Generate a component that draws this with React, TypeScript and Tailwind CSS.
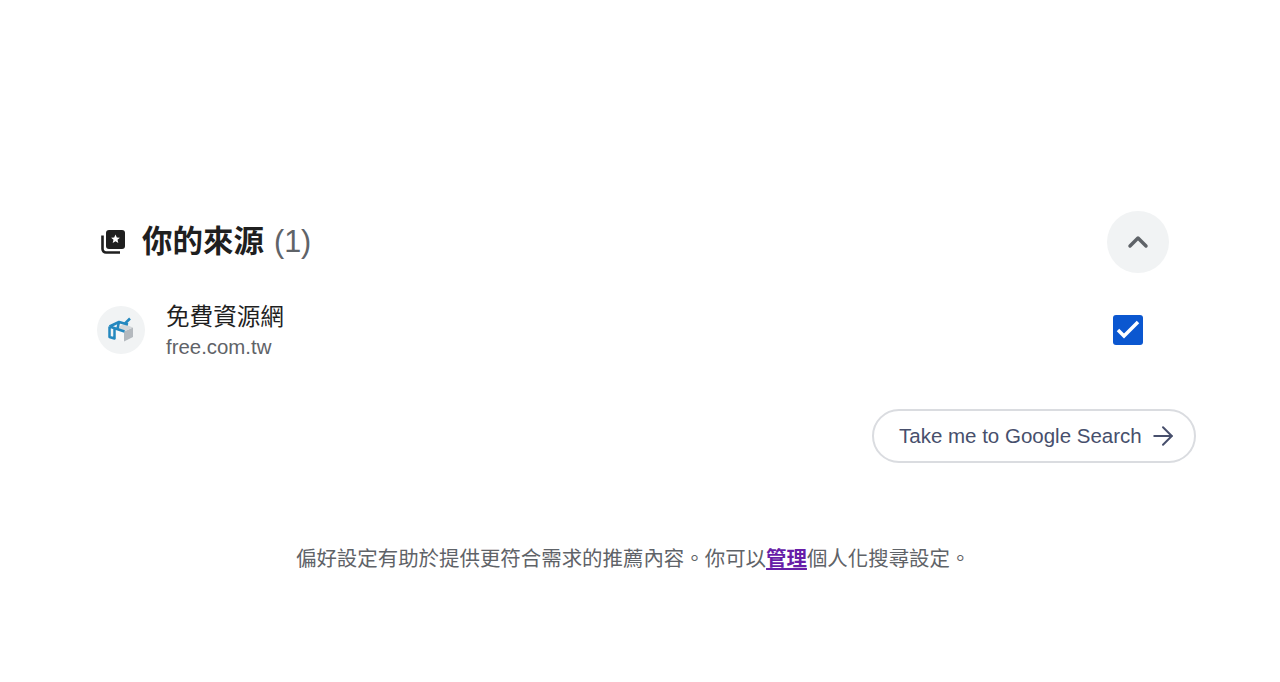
import React from "react";
import { ArrowRight, ChevronUp } from "lucide-react";

const SourcesIcon = () => (
  <svg width="28" height="28" viewBox="0 0 28 28" className="block">
    <rect x="7" y="2" width="19" height="19" rx="3" fill="#1f1f1f" />
    <path d="M16.5 6.6l1.3 2.9 3.1.3-2.4 2 .8 3.1-2.8-1.7-2.8 1.7.8-3.1-2.4-2 3.1-.3z" fill="#fff" />
    <path d="M3.5 7.5V21a3.5 3.5 0 0 0 3.5 3.5h14" fill="none" stroke="#1f1f1f" strokeWidth="2.6" />
  </svg>
);

const BoxLogo = () => (
  <svg width="28" height="28" viewBox="0 0 28 28" className="block">
    <path d="M17 15.500l9-4v9.500l-9 4.500z" fill="#b4b9be" />
    <path d="M8 12.500l9 3v10l-9-3.500z" fill="#f7f8f9" />
    <path d="M8 12.500l9-4.500 9 3.500-9 4z" fill="#d3d7da" />
    <path
      d="M2.500 10.500l9.500-4.500 9 2.500M2.500 10.500V21l5 1.500V12M2.500 10.500l6 2 9 3M12 6l-1.500 6.500M17.500 8L23 2.500"
      fill="none"
      stroke="#2488bf"
      strokeWidth="2.500"
      strokeLinejoin="round"
    />
  </svg>
);

const App: React.FC = () => {
  return (
    <div className="w-[1280px] h-[682px] bg-white overflow-hidden pt-[211px] font-['Liberation_Sans','Noto_Sans_CJK_TC',sans-serif]">
      {/* Encabezado */}
      <div className="flex items-center justify-between pl-[99px] pr-[111px] h-[62px]">
        <div className="flex items-center">
          <SourcesIcon />
          <h2 className="ml-[15px] mb-[2px] text-[30.500px] leading-[40px] font-semibold text-[#1f1f1f]">
            你的來源<span className="ml-[10px] font-normal text-[#5f6368]">(1)</span>
          </h2>
        </div>
        <button className="w-[62px] h-[62px] rounded-full bg-[#f1f3f4] flex items-center justify-center">
          <ChevronUp size={32} strokeWidth={2.6} className="text-[#5f6368]" />
        </button>
      </div>

      {/* Fuente */}
      <div className="flex items-center justify-between pl-[97px] pr-[137px] mt-[33px] h-[48px]">
        <div className="flex items-center">
          <div className="w-[48px] h-[48px] rounded-full bg-[#f1f3f4] flex items-center justify-center">
            <BoxLogo />
          </div>
          <div className="ml-[21px]">
            <div className="text-[23.600px] leading-[32px] mt-[1px] text-[#1f1f1f]">免費資源網</div>
            <div className="text-[20.400px] leading-[28px] text-[#5f6368]">free.com.tw</div>
          </div>
        </div>
        <div className="w-[30px] h-[30px] rounded-[3px] bg-[#0b57d0] flex items-center justify-center">
          <svg width="30" height="30" viewBox="0 0 30 30" fill="none">
            <path d="M5 15l6 6L25 7" stroke="#fff" strokeWidth="3.500" />
          </svg>
        </div>
      </div>

      {/* Boton */}
      <div className="flex justify-end pr-[84px] mt-[55px]">
        <button className="w-[324px] h-[54px] rounded-full border-2 border-[#dadce0] bg-white flex items-center pl-[25px] text-[#474f6c]">
          <span className="text-[20.500px] leading-[28px]">Take me to Google Search</span>
          <ArrowRight size={30} strokeWidth={1.600} className="ml-[6px]" />
        </button>
      </div>

      {/* Pie */}
      <p className="mt-[81px] pl-[296px] text-[20.450px] leading-[30px] text-[#5f6368] whitespace-nowrap">
        偏好設定有助於提供更符合需求的推薦內容。你可以
        <a href="#" className="font-bold text-[#681da8] underline">管理</a>
        個人化搜尋設定。
      </p>
    </div>
  );
};

export default App;
